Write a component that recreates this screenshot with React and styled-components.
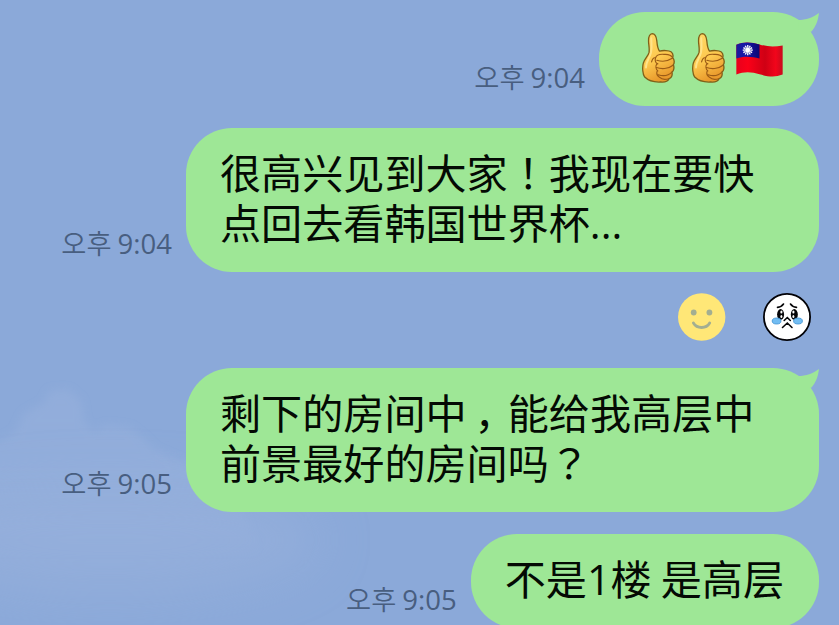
import styled, { createGlobalStyle } from 'styled-components';

const App = () => {
  return (
    <>
      <GlobalStyle />
      <ChatRoom>
        <Clouds />
        <Message>
          <Time>
            오후 <Clock>9:04</Clock>
          </Time>
          <Bubble>
            <Tail />
            <EmojiLine>
              <ThumbsUp />
              <ThumbsUp />
              <Flag />
            </EmojiLine>
          </Bubble>
        </Message>
        <Message>
          <Time>
            오후 <Clock>9:04</Clock>
          </Time>
          <Bubble>
            <Text>
              很高兴见到大家<Mark>！</Mark>我现在要快点回去看韩国世界杯...
            </Text>
          </Bubble>
        </Message>
        <Reactions>
          <Smile />
          <CryingFace />
        </Reactions>
        <Message>
          <Time>
            오후 <Clock>9:05</Clock>
          </Time>
          <Bubble>
            <Tail />
            <Text>
              剩下的房间中<Comma>，</Comma>能给我高层中前景最好的房间吗
              <Mark>？</Mark>
            </Text>
          </Bubble>
        </Message>
        <Message>
          <Time>
            오후 <Clock>9:05</Clock>
          </Time>
          <Bubble>
            <Text>不是1楼 是高层</Text>
          </Bubble>
        </Message>
      </ChatRoom>
    </>
  );
};

export default App;

const Clouds = () => (
  <CloudSvg viewBox="0 0 480 265">
    <defs>
      <linearGradient id="haze" x1="0" y1="0" x2="0" y2="1">
        <stop offset="0" stopColor="#9bb3dd" stopOpacity="0.45" />
        <stop offset="0.4" stopColor="#9bb3dd" stopOpacity="0.4" />
        <stop offset="0.75" stopColor="#9bb3dd" stopOpacity="0" />
      </linearGradient>
      <filter id="soft" x="-20%" y="-20%" width="140%" height="140%">
        <feGaussianBlur stdDeviation="4" />
      </filter>
      <filter id="softer" x="-40%" y="-60%" width="180%" height="220%">
        <feGaussianBlur stdDeviation="26" />
      </filter>
    </defs>
    <path
      d="M-10 86L16 72L24 54L44 43L50 31L68 30L81 41L84 62L94 72L106 65L130 68L145 80L154 90L178 100L230 115L280 250H-10Z"
      fill="url(#haze)"
      filter="url(#soft)"
    />
    <ellipse cx="110" cy="180" rx="210" ry="55" fill="#9bb3dd" opacity="0.5" filter="url(#softer)" />
  </CloudSvg>
);

const Tail = () => (
  <TailSvg viewBox="0 0 30 30">
    <path d="M9 8C17 8 24 5.5 30 1C29 9 27 14 22.5 19.5L10 22Z" fill="#9ee796" />
  </TailSvg>
);

const ThumbsUp = () => (
  <ThumbSvg viewBox="0 0 100 152">
    <defs>
      <linearGradient id="skin" x1="0" y1="0" x2="0.35" y2="1">
        <stop offset="0" stopColor="#ffd968" />
        <stop offset="0.6" stopColor="#fdc94f" />
        <stop offset="1" stopColor="#e99a2c" />
      </linearGradient>
    </defs>
    <path
      d="M20 30C19 16 20 3 31 2C43 2 44 16 45 25C46 38 48 48 53 55C64 52 82 53 88 57C95 62 95 69 93 75C99 80 99 92 95 97C99 104 96 116 91 119C93 130 88 137 82 139C78 148 65 150 56 149C35 150 18 144 8 134C2 126 0 105 4 91C8 79 18 70 21 60C23 50 21 40 20 30Z"
      fill="url(#skin)"
      stroke="#806018"
      strokeWidth="4"
    />
    <path
      d="M41 76C44 66 56 64 67 65C80 64 89 68 93 75M45 83C58 87 75 88 92 77M41 76C38 84 42 92 48 94M44 105C58 110 80 110 94 98M45 94C40 101 42 110 48 115M49 127C62 131 79 131 91 119M46 115C43 123 47 131 54 135C60 142 70 142 82 139M41 76C35 73 31 80 29 88"
      fill="none"
      stroke="#9b5b16"
      strokeWidth="3.5"
      strokeLinecap="round"
    />
    <path
      d="M28 16C28 32 31 44 27 60C22 77 12 88 12 105"
      fill="none"
      stroke="#ffe38b"
      strokeWidth="6"
      strokeLinecap="round"
    />
  </ThumbSvg>
);

const rays = [0, 30, 60, 90, 120, 150];

const Flag = () => (
  <FlagSvg viewBox="0 0 140 104">
    <defs>
      <linearGradient id="cloth">
        <stop offset="0" stopColor="#e8001c" />
        <stop offset="0.25" stopColor="#fa0018" />
        <stop offset="0.62" stopColor="#cf0014" />
        <stop offset="0.85" stopColor="#f2051b" />
        <stop offset="1" stopColor="#c90a1c" />
      </linearGradient>
      <linearGradient id="canton">
        <stop offset="0" stopColor="#1c1c9b" />
        <stop offset="0.4" stopColor="#1515a8" />
        <stop offset="1" stopColor="#080873" />
      </linearGradient>
    </defs>
    <path
      d="M1 8C24-3 48 1 70 7C96 15 116 14 139 10V97C115 106 96 103 70 96C48 89 24 87 1 97Z"
      fill="url(#cloth)"
    />
    <path
      d="M1 8C24-3 48 1 70 7V49C48 43 23 41 1 49Z"
      fill="url(#canton)"
    />
    <g stroke="#fff" strokeWidth="4">
      {rays.map((angle) => (
        <path key={angle} d="M20 24H50" transform={`rotate(${angle} 35 24)`} />
      ))}
    </g>
    <circle cx="35" cy="24" r="8.5" fill="#fff" stroke="#27279f" strokeWidth="1" />
  </FlagSvg>
);

const Smile = () => (
  <FaceSvg viewBox="0 0 48 48">
    <circle cx="23.7" cy="24" r="23.7" fill="#ffe777" />
    <circle cx="15.7" cy="19.5" r="2.9" fill="#a3ae91" />
    <circle cx="31.4" cy="19.5" r="2.9" fill="#a3ae91" />
    <path
      d="M15.4 30C19 36 28.2 36 31.7 30"
      fill="none"
      stroke="#a3ae91"
      strokeWidth="2.8"
      strokeLinecap="round"
    />
  </FaceSvg>
);

const CryingFace = () => (
  <FaceSvg viewBox="0 0 48 48">
    <circle cx="24" cy="24" r="23.1" fill="#fff" stroke="#020207" strokeWidth="1.8" />
    <g fill="#050507">
      <ellipse cx="17.6" cy="21.4" rx="3.5" ry="5.3" />
      <ellipse cx="31.3" cy="21.4" rx="3.5" ry="5.3" />
    </g>
    <g fill="#fff">
      <ellipse cx="18.4" cy="18.9" rx="1.1" ry="1.5" />
      <ellipse cx="18.4" cy="23.6" rx="1" ry="1.5" />
      <ellipse cx="30.4" cy="18.9" rx="1.1" ry="1.5" />
      <ellipse cx="30.4" cy="23.6" rx="1" ry="1.5" />
    </g>
    <g fill="#72bdf3" stroke="#3b8fd2" strokeWidth="0.8">
      <ellipse cx="13.6" cy="28" rx="4.4" ry="3" />
      <ellipse cx="35" cy="28" rx="4.4" ry="3" />
    </g>
    <g fill="none" stroke="#050507" strokeWidth="1.6" strokeLinecap="round">
      <path d="M14.5 14.4Q18.5 14 20.5 11M27.5 11Q29.5 14 33.5 14.4" />
      <path d="M21.2 27.5L24.3 24.5L27.3 27.5M19.5 34.5L24.3 30L29 34.5" />
    </g>
  </FaceSvg>
);

const GlobalStyle = createGlobalStyle`
  body {
    margin: 0;
    overflow: hidden;
  }
`;

const ChatRoom = styled.div`
  box-sizing: border-box;
  position: relative;
  display: flex;
  flex-direction: column;
  gap: 22px;
  height: 625px;
  padding: 12px 20px 0 0;
  overflow: hidden;
  background: #8ba9d9;
`;

/* wallpaper behind the messages */
const CloudSvg = styled.svg`
  position: absolute;
  left: 0;
  bottom: 0;
  width: 480px;
  height: 265px;
`;

const Message = styled.div`
  position: relative;
  display: flex;
  flex-shrink: 0;
  justify-content: flex-end;
  align-items: flex-end;
  gap: 14px;
`;

const Time = styled.div`
  padding-bottom: 9px;
  color: #485e80;
  font-family: 'Noto Sans CJK KR', sans-serif;
  font-size: 27.3px;
  font-weight: 350;
  line-height: 38px;
  white-space: nowrap;
`;

const Clock = styled.span`
  font-family: 'Open Sans', 'Noto Sans', sans-serif;
  font-size: 27.5px;
  font-weight: 400;
`;

const Bubble = styled.div`
  box-sizing: border-box;
  position: relative;
  max-width: 633px;
  padding: 22px 35px;
  border-radius: 46px;
  background: #9ee796;
`;

const TailSvg = styled.svg`
  position: absolute;
  top: 0;
  right: 0;
  width: 30px;
  height: 30px;
`;

const Text = styled.div`
  margin: -2px 0 2px -1px;
  color: #040a04;
  font-family: 'Open Sans', 'Noto Sans CJK SC', sans-serif;
  font-size: 41.1px;
  line-height: 50px;
  word-spacing: -1.5px;
`;

/* full-width punctuation sits in the middle of its cell */
const Mark = styled.span`
  font-family: 'Noto Sans CJK TC', sans-serif;
  line-height: 1;
`;

const Comma = styled(Mark)`
  position: relative;
  left: 8px;
  font-family: 'Noto Sans CJK SC', sans-serif;
`;

const EmojiLine = styled.div`
  display: flex;
  align-items: center;
  width: 150px;
  height: 50px;
`;

const ThumbSvg = styled.svg`
  width: 33px;
  height: 50px;
  margin-top: -2px;
  margin-left: 8px;
  margin-right: 9px;
`;

const FlagSvg = styled.svg`
  width: 47px;
  height: 35px;
  margin-left: 2px;
`;

const Reactions = styled.div`
  display: flex;
  flex-shrink: 0;
  justify-content: flex-end;
  gap: 37px;
  height: 53px;
  margin-top: -1px;
  padding-right: 8px;
`;

const FaceSvg = styled.svg`
  width: 48px;
  height: 48px;
`;
